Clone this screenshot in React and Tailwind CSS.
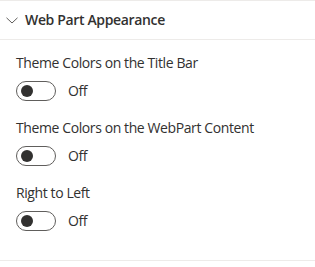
export default function App() {
  const items = [
    "Theme Colors on the Title Bar",
    "Theme Colors on the WebPart Content",
    "Right to Left",
  ];
  return (
    <div className="w-[315px] h-[267px] bg-white text-[#323130]" style={{ fontFamily: '"Segoe UI", "Open Sans", "Noto Sans", sans-serif' }}>
      <div className="border-t border-[#edebe9]">
        <div className="h-[39px] flex items-center pl-[6px] gap-[7px] border-b border-[#edebe9]">
          <svg width="12" height="7" viewBox="0 0 12 7" className="shrink-0">
            <path d="M0.5 0.8 L6 6 L11.5 0.8" fill="none" stroke="#605e5c" strokeWidth="1" />
          </svg>
          <span className="text-[14px] font-semibold leading-5 tracking-[-0.35px]">Web Part Appearance</span>
        </div>
        <div className="h-[221px] pl-4 pt-[13px] flex flex-col gap-[17px] border-b border-[#edebe9]">
          {items.map((t) => (
            <div key={t} className="flex flex-col gap-[8px]">
              <div className="text-[14px] leading-[20px] tracking-[-0.4px]">{t}</div>
              <div className="flex items-center gap-[12px] h-[20px]">
                <div className="w-10 h-5 rounded-full border border-[#605e5c] flex items-center pl-[4px]">
                  <div className="w-3 h-3 rounded-full bg-[#323130]" />
                </div>
                <span className="text-[14px] leading-5 tracking-[-0.4px]">Off</span>
              </div>
            </div>
          ))}
        </div>
      </div>
    </div>
  );
}
